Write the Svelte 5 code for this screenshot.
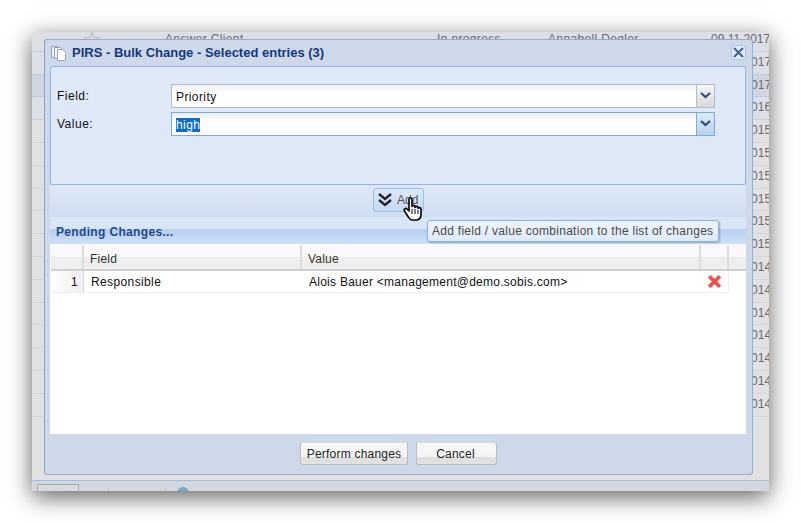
<script>
  const rows = [
    ['Answer Client', 'In progress', 'Annabell Degler', '09.11.2017'],
    ...['2017', '2017', '2016', '2015', '2015', '2015', '2015', '2015', '2015', '2014', '2014', '2014', '2014', '2014', '2014', '2014'].map(
      (y) => ['', '', '', '01.01.' + y]
    )
  ];
</script>

<div class="stage">
  <div class="window">
    <div class="list">
      {#each rows as r, i}
        <div class="row" class:tinted={i === 2}>
          <span class="star">{#if i === 0}☆{/if}</span>
          <span>{r[0]}</span>
          <span>{r[1]}</span>
          <span>{r[2]}</span>
          <span class="date">{r[3]}</span>
        </div>
      {/each}
    </div>
    <div class="pager">
      <span class="page-box"></span>
      <span class="sep"></span>
      <span class="sep"></span>
      <span class="refresh"></span>
    </div>
  </div>

  <div class="dialog">
    <header class="title">
      <svg class="doc" width="18" height="18" viewBox="0 0 18 18">
        <path d="M1.500 2.500h6l2 2v9h-8z" fill="#eef0f3" stroke="#9aa3ad" />
        <path d="M4.500 3.500h6l2 2v9h-8z" fill="#f3f4f6" stroke="#9aa3ad" />
        <path d="M7.500 5.500h5l3 3v8h-8z" fill="#fff" stroke="#9aa3ad" />
      </svg>
      <h1>PIRS - Bulk Change - Selected entries (3)</h1>
      <button class="close" aria-label="Close">
        <svg width="11" height="11" viewBox="0 0 11 11"><path d="M1 1l9 9M10 1l-9 9" stroke="#3f5f9f" stroke-width="2" /></svg>
      </button>
    </header>

    <section class="form">
      <div class="field">
        <span class="lbl">Field:</span>
        <div class="combo">
          <span class="combo-text">Priority</span>
          <span class="trigger">
            <svg width="11" height="7" viewBox="0 0 11 7"><path d="M1 1l4.500 4 4.500-4" fill="none" stroke="#2f4a85" stroke-width="2.200" /></svg>
          </span>
        </div>
      </div>
      <div class="field second">
        <span class="lbl">Value:</span>
        <div class="combo focus">
          <span class="combo-text"><mark>high</mark></span>
          <span class="trigger">
            <svg width="11" height="7" viewBox="0 0 11 7"><path d="M1 1l4.500 4 4.500-4" fill="none" stroke="#2f4a85" stroke-width="2.200" /></svg>
          </span>
        </div>
      </div>
    </section>

    <div class="addbar">
      <button class="add">
        <svg width="16" height="16" viewBox="0 0 16 16">
          <path d="M2 2l6 5 6-5M2 8l6 5 6-5" fill="none" stroke="#1d2733" stroke-width="2.400" />
        </svg>
        <span>Add</span>
      </button>
    </div>

    <div class="pending"><span>Pending Changes...</span></div>

    <div class="grid">
      <div class="ghead">
        <span class="c-num"></span>
        <span class="c-field">Field</span>
        <span class="c-value">Value</span>
        <span class="c-act"></span>
        <span class="c-fill"></span>
      </div>
      <div class="grow">
        <span class="c-num num">1</span>
        <span class="c-field">Responsible</span>
        <span class="c-value">Alois Bauer &lt;management@demo.sobis.com&gt;</span>
        <span class="c-act">
          <svg width="15" height="15" viewBox="0 0 15 15">
            <path d="M1 3.500L3.500 1 7.500 5 11.500 1 14 3.500 10 7.500 14 11.500 11.500 14 7.500 10 3.500 14 1 11.500 5 7.500z" fill="#ee4b4b" stroke="#e88" stroke-width=".6" />
          </svg>
        </span>
      </div>
    </div>

    <footer class="foot">
      <button class="btn perform">Perform changes</button>
      <button class="btn cancel">Cancel</button>
    </footer>
  </div>

  <div class="tip">Add field / value combination to the list of changes</div>

  <svg class="hand" width="20" height="25" viewBox="0 0 20 25">
    <path
      d="M6 2.500c0-2 3-2 3 0v7c0-1.500 3-1.500 3 0v1c0-1.500 3-1.500 3 0v1c0-1.500 3-1 3 .5v5.500c0 3-2 5-4 5.500H9c-2 0-3-2-4-3.500L1.500 14c-1-1.500 1-3.500 2.500-2l2 2z"
      fill="#fff"
      stroke="#000"
      stroke-width="1.600"
      stroke-linejoin="round"
    />
    <path d="M9 12v5M12 12v5M15 13v4" stroke="#000" stroke-width="1" />
  </svg>
</div>

<style>
  :global(body) {
    margin: 0;
    background: #fff;
  }
  .stage {
    position: relative;
    width: 801px;
    height: 523px;
    padding: 32px 0 0 32px;
    box-sizing: border-box;
    overflow: hidden;
    font-family: "Liberation Sans", Arial, sans-serif;
    font-size: 12px;
    color: #111;
  }
  .window {
    width: 737px;
    height: 459px;
    background: #e1e1e2;
    overflow: hidden;
    display: flex;
    flex-direction: column;
    box-shadow: 0 6px 22px rgba(0, 0, 0, 0.62);
  }
  .list {
    flex: 1;
    min-height: 0;
    margin-top: -3px;
    overflow: hidden;
  }
  .row {
    height: 22.8px;
    box-sizing: border-box;
    border-bottom: 1px solid #d6d6d8;
    display: grid;
    grid-template-columns: 133px 272px 111px 163px 90px;
    line-height: 21px;
    font-size: 12px;
    letter-spacing: 0.35px;
    color: #6e6a70;
    white-space: nowrap;
  }
  .row:nth-child(-n + 4) {
    border-bottom: 1px dotted #a9bbdf;
    background: #dcdfe6;
  }
  .row.tinted {
    background: #cfd6e2;
  }
  .star {
    text-align: right;
    padding-right: 63px;
    font-size: 22px;
    color: #a9acb2;
  }
  .date {
    letter-spacing: 0;
  }
  .pager {
    height: 11px;
    flex: none;
    border-top: 1px solid #a5bfdf;
    background: #d3d7df;
    display: flex;
    align-items: flex-start;
    padding: 3px 0 0 5px;
    box-sizing: border-box;
  }
  .page-box {
    width: 40px;
    height: 12px;
    border: 1px solid #a9a9ab;
    background: #d9dadd;
  }
  .sep {
    width: 1px;
    height: 8px;
    margin: 4px 0 0 29px;
    background: #b4bfd3;
  }
  .sep + .sep {
    margin-left: 56px;
  }
  .refresh {
    width: 12px;
    height: 12px;
    border-radius: 50%;
    background: #7fa3cb;
    margin: 3px 0 0 11px;
  }

  .dialog {
    position: absolute;
    left: 44px;
    top: 39px;
    width: 709px;
    height: 436px;
    box-sizing: border-box;
    background: #cdd9e8;
    border: 1px solid #9aacc6;
    border-left-color: #85a5d0;
    border-right-color: #8fb0d8;
    border-radius: 3px;
    display: flex;
    flex-direction: column;
    padding: 0 6px 0 5px;
  }
  .title {
    height: 26px;
    flex: none;
    display: flex;
    align-items: center;
    gap: 4px;
    padding-bottom: 1px;
    box-sizing: border-box;
  }
  .doc {
    flex: none;
  }
  h1 {
    margin: 0;
    flex: 1;
    font-size: 13px;
    font-weight: bold;
    color: #15397f;
    white-space: nowrap;
  }
  .close {
    width: 15px;
    height: 15px;
    padding: 0;
    border: 1px solid #a9c4ea;
    border-radius: 3px;
    background: #e4edfa;
    display: flex;
    align-items: center;
    justify-content: center;
  }

  .form {
    height: 119px;
    flex: none;
    box-sizing: border-box;
    background: #dfe8f6;
    border: 1px solid #8fb3e2;
    border-radius: 2px;
    padding: 17px 30px 0 6px;
  }
  .field {
    display: flex;
    align-items: center;
    height: 24px;
  }
  .second {
    margin-top: 4px;
  }
  .lbl {
    width: 114px;
    flex: none;
    font-size: 12px;
    letter-spacing: 0.5px;
    margin-top: -1px;
  }
  .combo {
    flex: 1;
    height: 24px;
    box-sizing: border-box;
    border: 1px solid #b3bccb;
    background: linear-gradient(#ececec, #fff 7px);
    display: flex;
    align-items: center;
  }
  .combo-text {
    flex: 1;
    padding: 1px 0 0 4px;
    letter-spacing: 0.4px;
  }
  .trigger {
    width: 18px;
    height: 22px;
    flex: none;
    border-left: 1px solid #b3bccb;
    background: linear-gradient(#f6f6f6, #d8d8d8);
    display: flex;
    align-items: center;
    justify-content: center;
    padding-bottom: 2px;
    box-sizing: border-box;
  }
  .focus {
    border-color: #7eaad8;
  }
  .focus .trigger {
    border-left-color: #7eaad8;
    background: linear-gradient(#dcebf8, #b8d2ea);
  }
  mark {
    background: #0a6ccf;
    color: #fff;
  }

  .addbar {
    height: 32px;
    flex: none;
    background: linear-gradient(#dee8f6, #cfdef2);
    display: flex;
    justify-content: center;
    padding: 3px 0 0 0;
    box-sizing: border-box;
  }
  .add {
    width: 51px;
    height: 24px;
    padding: 0 0 0 3px;
    box-sizing: border-box;
    margin-left: 1px;
    border: 1px solid #9cbde6;
    border-radius: 3px;
    background: linear-gradient(#dbe8f8, #c5d9f2);
    display: flex;
    align-items: center;
    gap: 4px;
    font: 12px "Liberation Sans", Arial, sans-serif;
    color: #555;
  }

  .pending {
    height: 27px;
    flex: none;
    box-sizing: border-box;
    background: linear-gradient(#d9e6f6 0, #d9e6f6 12px, #b7cff0 12px, #cfe0f5 100%);
    padding: 8px 0 0 6px;
    font-weight: bold;
    font-size: 12px;
    letter-spacing: 0.34px;
    color: #1f4a91;
  }

  .grid {
    height: 189px;
    flex: none;
    background: #fff;
    border-top: 1px solid #fff;
  }
  .ghead,
  .grow {
    display: flex;
    box-sizing: border-box;
  }
  .ghead {
    height: 26px;
    margin-left: 1px;
    background: linear-gradient(#f9f9f9 0, #f9f9f9 50%, #eeeeee 50%, #efefef 100%);
    border-bottom: 2px solid #d0d0d0;
    color: #333;
    letter-spacing: 0.2px;
  }
  .ghead span {
    border-right: 2px solid #dcdcdc;
    padding-left: 6px;
    line-height: 28px;
    box-sizing: border-box;
  }
  .c-num {
    width: 33px;
    flex: none;
  }
  .c-field {
    width: 218px;
    flex: none;
  }
  .c-value {
    width: 399px;
    flex: none;
  }
  .c-act {
    width: 28px;
    flex: none;
  }
  .ghead .c-fill {
    flex: 1;
    border-right: 0;
    padding: 0;
  }
  .grow {
    height: 22px;
    width: 678px;
    margin-left: 1px;
    border-bottom: 1px solid #ededed;
    letter-spacing: 0.38px;
    line-height: 23px;
  }
  .grow .c-field {
    padding-left: 7px;
    box-sizing: border-box;
  }
  .grow .c-value {
    padding-left: 7px;
    box-sizing: border-box;
    letter-spacing: 0.26px;
  }
  .num {
    text-align: right;
    padding-right: 5px;
    box-sizing: border-box;
    background: linear-gradient(90deg, #fff, #eeeeee);
    border-right: 1px solid #dcdcdc;
  }
  .grow .c-act {
    display: flex;
    align-items: center;
    justify-content: center;
    box-sizing: border-box;
    border-right: 1px solid #eeeeee;
  }

  .foot {
    flex: 1;
    display: flex;
    justify-content: center;
    align-items: flex-start;
    gap: 8px;
    padding-top: 8px;
    margin-left: -5px;
    margin-right: -6px;
  }
  .btn {
    height: 23px;
    padding: 0;
    box-sizing: border-box;
    border: 1px solid #bcbcbc;
    border-top-color: #d8d8d8;
    border-radius: 3px;
    background: linear-gradient(#f7f7f7 0, #f4f4f4 65%, #dedede 65%, #e2e2e2 100%);
    font: 12px "Liberation Sans", Arial, sans-serif;
    letter-spacing: 0.22px;
    color: #222;
  }
  .perform {
    width: 108px;
  }
  .cancel {
    width: 81px;
    padding-right: 2px;
  }

  .tip {
    position: absolute;
    left: 427px;
    top: 220px;
    width: 292px;
    height: 22px;
    box-sizing: border-box;
    background: linear-gradient(#eef4fc, #dfeafa);
    border: 1px solid #8fb0de;
    border-radius: 3px;
    box-shadow: 1px 1px 2px rgba(60, 90, 140, 0.4);
    padding-left: 4px;
    line-height: 21px;
    font-size: 12px;
    letter-spacing: 0.28px;
    color: #4a4a4a;
    white-space: nowrap;
  }
  .hand {
    position: absolute;
    left: 403px;
    top: 197px;
  }
</style>
